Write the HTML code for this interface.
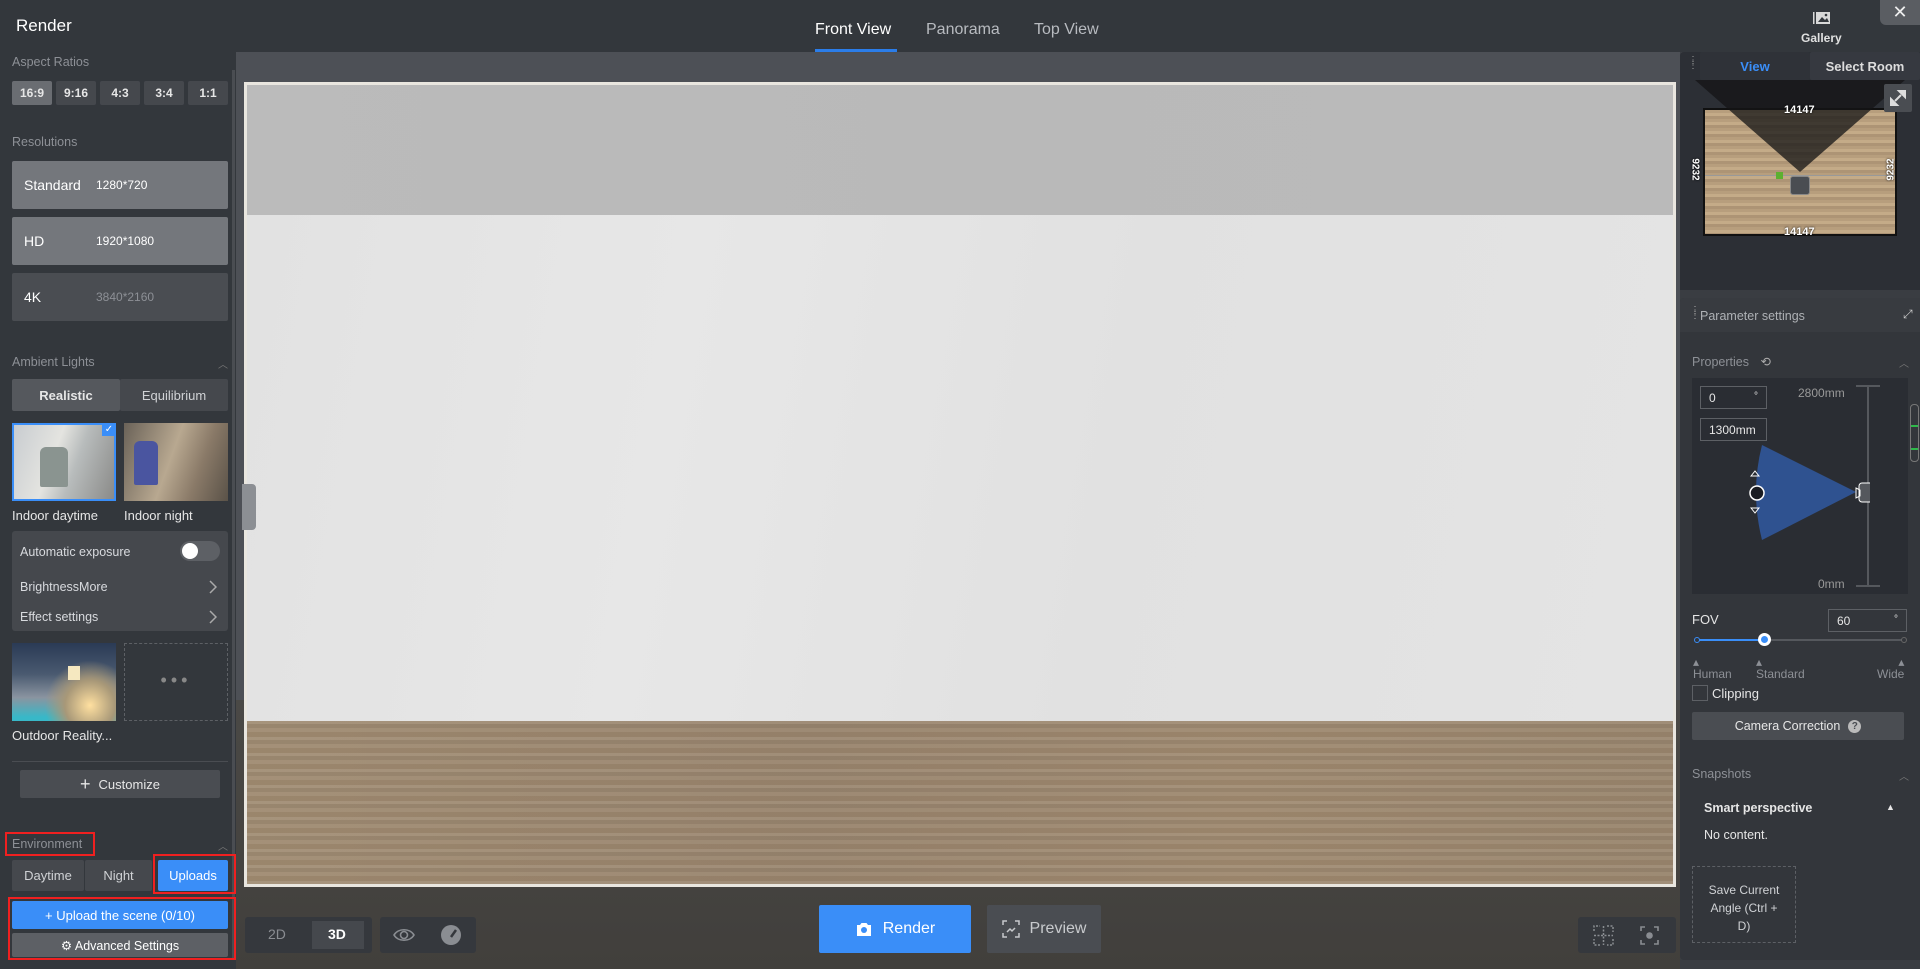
<!DOCTYPE html>
<html><head><meta charset="utf-8">
<style>
*{margin:0;padding:0;box-sizing:border-box}
body{width:1920px;height:969px;overflow:hidden;background:#33373c;font-family:"Liberation Sans",sans-serif;color:#e6e6e6;position:relative;font-size:13px}
.a{position:absolute}
.lbl{color:#8d9096;font-size:12.5px}
.btn{position:absolute;display:flex;align-items:center;justify-content:center;border-radius:2px}
.wood{background:
repeating-linear-gradient(180deg,rgba(255,255,255,.06) 0 3px,rgba(0,0,0,.05) 3px 7px,rgba(255,255,255,.03) 7px 11px,rgba(80,50,20,.08) 11px 16px),
linear-gradient(90deg,#a18d74,#9a8670 40%,#a08b72 70%,#9a8770)}
</style></head><body>
<!-- top bar -->
<div class="a" style="left:0;top:0;width:1920px;height:52px;background:#33373c"></div>
<div class="a" style="left:16px;top:16px;font-size:17px;color:#fff">Render</div>
<div class="a" style="left:815px;top:21px;font-size:16px;color:#fff">Front View</div>
<div class="a" style="left:815px;top:49px;width:82px;height:3px;background:#2b7de9"></div>
<div class="a" style="left:926px;top:21px;font-size:16px;color:#b8bbc0">Panorama</div>
<div class="a" style="left:1034px;top:21px;font-size:16px;color:#b8bbc0">Top View</div>
<svg class="a" style="left:1813px;top:11px" width="18" height="14" viewBox="0 0 18 14"><rect x="3" y="1" width="14" height="12" fill="#d8d8d8"/><rect x="0" y="1" width="1.5" height="12" fill="#d8d8d8"/><path d="M5 11l4-5 3 3 2-2 2 4z" fill="#33373c"/><circle cx="13" cy="4" r="1.3" fill="#33373c"/></svg>
<div class="a" style="left:1801px;top:31px;font-size:12px;font-weight:bold;color:#e0e0e0">Gallery</div>
<div class="a" style="left:1880px;top:0;width:40px;height:25px;background:#5a5d62;border-radius:0 0 0 6px;color:#eee;font-size:18px;text-align:center;line-height:24px">✕</div>

<!-- center canvas -->
<div class="a" style="left:236px;top:52px;width:1444px;height:917px;background:linear-gradient(180deg,#4d5056 0,#4d5056 80%,#44423f 100%)"></div>
<div class="a" style="left:236px;top:700px;width:1444px;height:269px;background:linear-gradient(180deg,#4a4946,#413f3c)"></div>
<div class="a" style="left:244px;top:82px;width:1432px;height:805px;background:#e9e6df;padding:3px">
 <div style="position:relative;width:100%;height:100%;overflow:hidden">
  <div class="a" style="left:0;top:0;width:100%;height:130px;background:linear-gradient(90deg,#bbb,#b9b9b9 50%,#bababa)"></div>
  <div class="a" style="left:0;top:130px;width:100%;height:506px;background:linear-gradient(100deg,#e2e2e2,#e7e7e7 30%,#e1e1e1 60%,#e4e4e4)"></div>
  <div class="a wood" style="left:0;top:636px;width:100%;height:165px"></div>
 </div>
</div>
<div class="a" style="left:242px;top:484px;width:14px;height:46px;background:#8c8f94;border-radius:0 4px 4px 0"></div>

<!-- bottom toolbar -->
<div class="a" style="left:245px;top:917px;width:127px;height:36px;background:#35383d;border-radius:3px"></div>
<div class="a" style="left:268px;top:926px;color:#8a8d92;font-size:14px">2D</div>
<div class="a" style="left:312px;top:921px;width:52px;height:28px;background:#45484d"></div>
<div class="a" style="left:328px;top:926px;color:#fff;font-size:14px;font-weight:bold">3D</div>
<div class="a" style="left:380px;top:917px;width:96px;height:36px;background:#35383d;border-radius:3px"></div>
<svg class="a" style="left:393px;top:925px" width="22" height="20" viewBox="0 0 22 20"><path d="M1 10C5 3 17 3 21 10C17 17 5 17 1 10Z" fill="none" stroke="#8a8d92" stroke-width="1.6"/><circle cx="11" cy="10" r="3.5" fill="none" stroke="#8a8d92" stroke-width="1.6"/></svg>
<svg class="a" style="left:440px;top:924px" width="22" height="22" viewBox="0 0 22 22"><circle cx="11" cy="11" r="10" fill="#8a8d92"/><path d="M11 13L16 6" stroke="#35383d" stroke-width="2.5"/></svg>
<div class="btn" style="left:819px;top:905px;width:152px;height:48px;background:#3a8ef8;color:#fff;font-size:16px">
<svg width="18" height="18" viewBox="0 0 18 18" style="margin-right:10px"><path d="M2 5h3l1.5-2h5L13 5h3v11H2z" fill="#fff"/><circle cx="9" cy="10" r="3" fill="#3a8ef8"/></svg>Render</div>
<div class="btn" style="left:987px;top:905px;width:114px;height:48px;background:#4a4d52;color:#c8cacd;font-size:16px">
<svg width="18" height="18" viewBox="0 0 18 18" style="margin-right:10px" fill="none" stroke="#c8cacd" stroke-width="1.5"><path d="M1 5V1h4M13 1h4v4M17 13v4h-4M5 17H1v-4M5 12l3-3 2 2 3-3"/></svg>Preview</div>
<div class="a" style="left:1578px;top:917px;width:98px;height:36px;background:#35383d;border-radius:3px"></div>
<svg class="a" style="left:1593px;top:925px" width="21" height="21" viewBox="0 0 21 21" fill="none" stroke="#8a8d92" stroke-width="1.5"><path d="M1 6V1h6M14 1h6v6M20 14v6h-6M7 20H1v-6M10.5 1v19M1 10.5h19" stroke-dasharray="2 1.5"/></svg>
<svg class="a" style="left:1640px;top:926px" width="19" height="19" viewBox="0 0 19 19" fill="none" stroke="#8a8d92" stroke-width="1.6"><path d="M1 5V1h4M14 1h4v4M18 14v4h-4M5 18H1v-4"/><circle cx="9.5" cy="9.5" r="2.5" fill="#8a8d92"/></svg>

<!-- left panel -->
<div class="a" style="left:0;top:52px;width:236px;height:917px;background:#33373c"></div>
<div class="a" style="left:232px;top:70px;width:3px;height:890px;background:#4a4d52"></div>
<div class="a lbl" style="left:12px;top:55px">Aspect Ratios</div>
<div class="btn" style="left:12px;top:81px;width:40px;height:24px;background:#6a6d72;font-size:12px;font-weight:bold">16:9</div>
<div class="btn" style="left:56px;top:81px;width:40px;height:24px;background:#45484d;font-size:12px;font-weight:bold">9:16</div>
<div class="btn" style="left:100px;top:81px;width:40px;height:24px;background:#45484d;font-size:12px;font-weight:bold">4:3</div>
<div class="btn" style="left:144px;top:81px;width:40px;height:24px;background:#45484d;font-size:12px;font-weight:bold">3:4</div>
<div class="btn" style="left:188px;top:81px;width:40px;height:24px;background:#45484d;font-size:12px;font-weight:bold">1:1</div>
<div class="a lbl" style="left:12px;top:135px">Resolutions</div>
<div class="a" style="left:12px;top:161px;width:216px;height:48px;background:#74777c;border-radius:2px"></div>
<div class="a" style="left:24px;top:177px;font-size:14px;color:#fff">Standard</div><div class="a" style="left:96px;top:178px;font-size:12px;color:#fff">1280*720</div>
<div class="a" style="left:12px;top:217px;width:216px;height:48px;background:#74777c;border-radius:2px"></div>
<div class="a" style="left:24px;top:233px;font-size:14px;color:#fff">HD</div><div class="a" style="left:96px;top:234px;font-size:12px;color:#fff">1920*1080</div>
<div class="a" style="left:12px;top:273px;width:216px;height:48px;background:#4a4d52;border-radius:2px"></div>
<div class="a" style="left:24px;top:289px;font-size:14px;color:#fff">4K</div><div class="a" style="left:96px;top:290px;font-size:12px;color:#8d9096">3840*2160</div>
<div class="a lbl" style="left:12px;top:355px">Ambient Lights</div>
<div class="a" style="left:218px;top:356px;color:#777;font-size:10px">︿</div>
<div class="btn" style="left:12px;top:379px;width:108px;height:32px;background:#55585d;font-weight:bold">Realistic</div>
<div class="btn" style="left:120px;top:379px;width:108px;height:32px;background:#45484d;color:#d0d2d5">Equilibrium</div>
<div class="a" style="left:12px;top:423px;width:104px;height:78px;border:2px solid #3a8ef8;background:linear-gradient(110deg,#c8ccd0,#e4e4e0 40%,#b8bcbc 60%,#8a8a88)"></div>
<div class="a" style="left:40px;top:447px;width:28px;height:40px;background:#8a9490;border-radius:6px 6px 2px 2px"></div>
<div class="a" style="left:102px;top:423px;width:14px;height:13px;background:#3a8ef8;color:#fff;font-size:10px;text-align:center;line-height:13px">✓</div>
<div class="a" style="left:124px;top:423px;width:104px;height:78px;background:linear-gradient(110deg,#6a6258,#b8a890 45%,#8a7a68 70%,#5a5248)"></div>
<div class="a" style="left:134px;top:441px;width:24px;height:44px;background:#4a55a0;border-radius:6px 6px 2px 2px"></div>
<div class="a" style="left:12px;top:508px;font-size:13px">Indoor daytime</div>
<div class="a" style="left:124px;top:508px;font-size:13px">Indoor night</div>
<div class="a" style="left:12px;top:531px;width:216px;height:100px;background:#45484d;border-radius:3px"></div>
<div class="a" style="left:20px;top:545px;font-size:12.5px;color:#d8dade">Automatic exposure</div>
<div class="a" style="left:180px;top:541px;width:40px;height:20px;background:#5d6065;border-radius:10px"></div>
<div class="a" style="left:182px;top:543px;width:16px;height:16px;background:#fff;border-radius:50%"></div>
<div class="a" style="left:20px;top:580px;font-size:12.5px;color:#d8dade">BrightnessMore</div>
<div class="a" style="left:20px;top:610px;font-size:12.5px;color:#d8dade">Effect settings</div>
<svg class="a" style="left:209px;top:580px" width="8" height="44" viewBox="0 0 8 44" fill="none" stroke="#aaa" stroke-width="1.5"><path d="M1 1l6 6-6 6M1 31l6 6-6 6"/></svg>
<div class="a" style="left:12px;top:643px;width:104px;height:78px;background:radial-gradient(circle at 75% 80%,#ffe0a0,#a89878 25%,transparent 45%),linear-gradient(180deg,#2a3a55,#4a5a70 40%,#8a94a0 70%,#38b8c8 95%)"></div>
<div class="a" style="left:68px;top:666px;width:12px;height:14px;background:#f5e8c0"></div>
<div class="a" style="left:124px;top:643px;width:104px;height:78px;border:1px dashed #5d6065;color:#888;text-align:center;line-height:72px;font-size:18px;letter-spacing:4px">•••</div>
<div class="a" style="left:12px;top:728px;font-size:13px">Outdoor Reality...</div>
<div class="a" style="left:12px;top:761px;width:216px;height:1px;background:#4a4d52"></div>
<div class="btn" style="left:20px;top:770px;width:200px;height:28px;background:#4a4d52;font-size:13px"><span style="font-size:18px;margin-right:8px">+</span>Customize</div>
<div class="a lbl" style="left:12px;top:837px">Environment</div>
<div class="a" style="left:5px;top:832px;width:90px;height:24px;border:2px solid #f02020"></div>
<div class="a" style="left:218px;top:838px;color:#777;font-size:10px">︿</div>
<div class="btn" style="left:12px;top:860px;width:72px;height:31px;background:#45484d;color:#d0d2d5">Daytime</div>
<div class="btn" style="left:85px;top:860px;width:67px;height:31px;background:#45484d;color:#d0d2d5">Night</div>
<div class="btn" style="left:158px;top:860px;width:70px;height:31px;background:#3a8ef8;color:#fff">Uploads</div>
<div class="a" style="left:153px;top:854px;width:83px;height:40px;border:2px solid #f02020"></div>
<div class="btn" style="left:12px;top:901px;width:216px;height:28px;background:#3a8ef8;color:#fff;font-size:13px">+ Upload the scene (0/10)</div>
<div class="btn" style="left:12px;top:933px;width:216px;height:24px;background:#5d6065;color:#fff;font-size:12.5px">⚙ Advanced Settings</div>
<div class="a" style="left:8px;top:897px;width:228px;height:63px;border:2px solid #f02020"></div>

<!-- right panel -->
<div class="a" style="left:1680px;top:52px;width:240px;height:917px;background:#3a3d42"></div>
<div class="a" style="left:1680px;top:52px;width:240px;height:238px;background:#2c2f35;border-radius:4px 0 0 0"></div>
<div class="a" style="left:1688px;top:58px;color:#999;font-size:10px;line-height:5px">⋮<br>⋮</div>
<div class="btn" style="left:1700px;top:52px;width:110px;height:28px;background:#2f3238;color:#3a8ef8;font-weight:bold">View</div>
<div class="btn" style="left:1810px;top:52px;width:110px;height:28px;background:#363940;color:#ddd;font-weight:bold">Select Room</div>
<div class="a" style="left:1703px;top:108px;width:194px;height:128px;border:2px solid #111;background:repeating-linear-gradient(180deg,#b79e7d 0 3px,#c4ab88 3px 6px,#ad9475 6px 9px)"></div>
<svg class="a" style="left:1690px;top:80px" width="220" height="100" viewBox="0 0 220 100"><path d="M5 0H215L110 92Z" fill="rgba(20,20,22,.75)"/></svg>
<div class="a" style="left:1705px;top:175px;width:190px;height:1px;background:#999"></div>
<div class="a" style="left:1776px;top:172px;width:7px;height:7px;background:#5cb030"></div>
<div class="a" style="left:1790px;top:176px;width:20px;height:19px;background:#4a4d52;border:1px solid #888;border-radius:3px"></div>
<div class="a" style="left:1784px;top:104px;font-size:11px;font-weight:bold;color:#fff;text-shadow:0 0 2px #000">14147</div>
<div class="a" style="left:1784px;top:226px;font-size:11px;font-weight:bold;color:#fff;text-shadow:0 0 2px #000">14147</div>
<div class="a" style="left:1684px;top:164px;font-size:10px;font-weight:bold;color:#fff;transform:rotate(90deg);text-shadow:0 0 2px #000">9232</div>
<div class="a" style="left:1880px;top:164px;font-size:10px;font-weight:bold;color:#fff;transform:rotate(-90deg);text-shadow:0 0 2px #000">9232</div>
<div class="a" style="left:1884px;top:84px;width:28px;height:28px;background:#4a4d52;border-radius:2px"></div>
<svg class="a" style="left:1890px;top:90px" width="16" height="16" viewBox="0 0 16 16" fill="#ddd"><path d="M9 1h6v6zM1 9v6h6zM5 11l6-6" stroke="#ddd" stroke-width="2"/></svg>

<div class="a" style="left:1680px;top:298px;width:240px;height:662px;background:#33363b;border-radius:4px 0 0 4px"></div>
<div class="a" style="left:1680px;top:298px;width:240px;height:34px;background:#383b40;border-radius:4px 0 0 0"></div>
<div class="a" style="left:1690px;top:308px;color:#aaa;font-size:10px;line-height:5px">⋮<br>⋮</div>
<div class="a" style="left:1700px;top:309px;color:#aeb1b5;font-size:12.5px">Parameter settings</div>
<div class="a" style="left:1903px;top:307px;color:#ccc;font-size:12px">⤢</div>
<div class="a lbl" style="left:1692px;top:354px">Properties <span style="margin-left:8px;color:#aaa">⟲</span></div>
<div class="a" style="left:1899px;top:355px;color:#777;font-size:10px">︿</div>
<div class="a" style="left:1692px;top:378px;width:216px;height:216px;background:#2a2d33"></div>
<div class="a" style="left:1700px;top:386px;width:67px;height:23px;border:1px solid #5d6065;padding:4px 8px;font-size:12px">0<span style="float:right;font-size:10px">°</span></div>
<div class="a" style="left:1700px;top:418px;width:67px;height:23px;border:1px solid #5d6065;padding:4px 8px;font-size:12px">1300mm</div>
<div class="a" style="left:1798px;top:386px;color:#999;font-size:12px">2800mm</div>
<div class="a" style="left:1818px;top:577px;color:#999;font-size:12px">0mm</div>
<div class="a" style="left:1867px;top:386px;width:2px;height:200px;background:#55585d"></div>
<div class="a" style="left:1856px;top:385px;width:24px;height:2px;background:#55585d"></div>
<div class="a" style="left:1856px;top:585px;width:24px;height:2px;background:#55585d"></div>
<svg class="a" style="left:1745px;top:440px" width="125" height="105" viewBox="0 0 125 105"><path d="M17 5L111 52L17 100Q5 52 17 5Z" fill="#2f5290"/><path d="M6 36l4-5 4 5z" fill="none" stroke="#fff"/><circle cx="12" cy="53" r="7" fill="#1a1c22" stroke="#fff" stroke-width="1.5"/><path d="M6 68l4 5 4-5z" fill="none" stroke="#fff"/><rect x="114" y="43" width="15" height="19" rx="3" fill="#55585d" stroke="#fff"/><path d="M111 48l4 2v6l-4 2z" fill="none" stroke="#fff"/></svg>
<div class="a" style="left:1910px;top:404px;width:9px;height:58px;border:1px solid #777;border-radius:4px;background:repeating-linear-gradient(180deg,transparent 0 20px,#2eb84a 20px 22px,transparent 22px 23px)"></div>
<div class="a" style="left:1692px;top:612px;font-size:13px">FOV</div>
<div class="a" style="left:1828px;top:609px;width:79px;height:23px;border:1px solid #5d6065;padding:4px 8px;font-size:12px">60<span style="float:right;font-size:10px">°</span></div>
<div class="a" style="left:1696px;top:639px;width:210px;height:2px;background:#55585d"></div>
<div class="a" style="left:1696px;top:639px;width:68px;height:2px;background:#3a8ef8"></div>
<div class="a" style="left:1694px;top:637px;width:6px;height:6px;border:1.5px solid #3a8ef8;border-radius:50%;background:#33363b"></div>
<div class="a" style="left:1901px;top:637px;width:6px;height:6px;border:1.5px solid #666;border-radius:50%;background:#33363b"></div>
<div class="a" style="left:1758px;top:633px;width:13px;height:13px;border:3px solid #fff;border-radius:50%;background:#3a8ef8"></div>
<div class="a" style="left:1693px;top:656px;color:#8d9096;font-size:12px;line-height:12px">▴<br>Human</div>
<div class="a" style="left:1756px;top:656px;color:#8d9096;font-size:12px;line-height:12px">▴<br>Standard</div>
<div class="a" style="left:1877px;top:656px;color:#8d9096;font-size:12px;line-height:12px;text-align:right">▴<br>Wide</div>
<div class="a" style="left:1692px;top:685px;width:16px;height:16px;border:1px solid #5d6065"></div>
<div class="a" style="left:1712px;top:686px;font-size:13px">Clipping</div>
<div class="btn" style="left:1692px;top:712px;width:212px;height:28px;background:#4a4d52;font-size:12.5px">Camera Correction <span style="display:inline-block;width:13px;height:13px;border-radius:50%;background:#bbb;color:#4a4d52;font-size:10px;text-align:center;line-height:13px;margin-left:8px;font-weight:bold">?</span></div>
<div class="a lbl" style="left:1692px;top:767px">Snapshots</div>
<div class="a" style="left:1899px;top:768px;color:#777;font-size:10px">︿</div>
<div class="a" style="left:1704px;top:801px;font-size:12.5px;font-weight:bold">Smart perspective</div>
<div class="a" style="left:1886px;top:802px;font-size:9px">▲</div>
<div class="a" style="left:1704px;top:828px;font-size:12.5px">No content.</div>
<div class="a" style="left:1692px;top:866px;width:104px;height:77px;border:1px dashed #5d6065;font-size:12px;text-align:center;padding-top:14px;line-height:18px;color:#d0d2d5">Save Current<br>Angle (Ctrl +<br>D)</div>
</body></html>
